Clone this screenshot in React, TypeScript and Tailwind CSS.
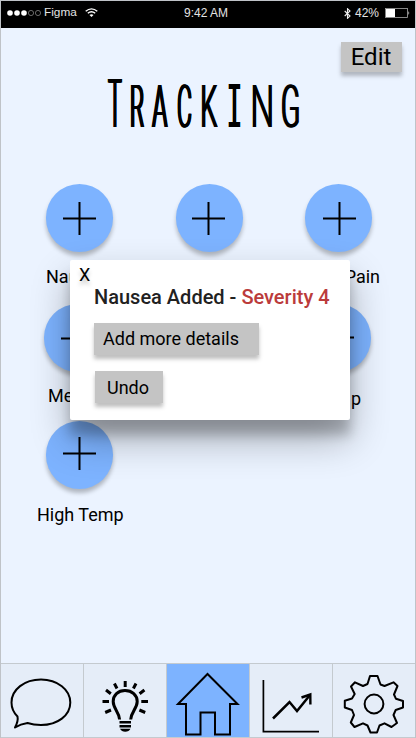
import React from "react";

const title: { ch: string; box: string; glyph: string }[] = [
  { ch: "T", box: "w-[22px]", glyph: "scale-x-[0.38] scale-y-[1.12] origin-[50%_56px]" },
  { ch: "R", box: "w-[22px]", glyph: "scale-x-[0.37]" },
  { ch: "A", box: "w-[24px]", glyph: "scale-x-[0.4]" },
  { ch: "C", box: "w-[24px]", glyph: "scale-x-[0.38]" },
  { ch: "K", box: "w-[26px]", glyph: "scale-x-[0.45] [text-shadow:-2px_0_#000,2px_0_#000]" },
  {
    ch: "I",
    box: "w-[24px]",
    glyph: "font-['DejaVu_Sans_Mono'] text-[58px] scale-x-[0.45] [text-shadow:-1px_0_#000,1px_0_#000]",
  },
  { ch: "N", box: "w-[32px]", glyph: "scale-x-[0.56] [text-shadow:-1.2px_0_#000,1.2px_0_#000]" },
  { ch: "G", box: "w-[26px]", glyph: "scale-x-[0.47] [text-shadow:-2px_0_#000,2px_0_#000]" },
];

function AddButton({ className = "", plus = "" }: { className?: string; plus?: string }) {
  return (
    <button
      className={`flex h-[68px] w-[67px] shrink-0 items-center justify-center rounded-full bg-[#7db3ff] shadow-[0_4px_4px_rgba(0,0,0,0.25)] ${className}`}
    >
      <svg className={`h-[33px] w-[33px] ${plus}`} viewBox="0 0 33 33" stroke="#000" strokeWidth="2">
        <path d="M0 16.5H33M16.5 0V33" />
      </svg>
    </button>
  );
}

function StatusBar() {
  return (
    <header className="flex h-[27px] shrink-0 items-center justify-between bg-black pr-[5px] pl-[6px] font-['Liberation_Sans',sans-serif] text-[12px] leading-none text-[#e4e4e4]">
      <div className="flex w-[150px] items-center pb-[3px]">
        <svg className="h-[8px] w-[35px]" viewBox="0 0 35 8">
          <g fill="#fff">
            <circle cx="3" cy="4" r="2.8" />
            <circle cx="10" cy="4" r="2.8" />
            <circle cx="17" cy="4" r="2.8" />
          </g>
          <g fill="none" stroke="#aaa" strokeWidth=".6">
            <circle cx="24" cy="4" r="2.6" />
            <circle cx="31" cy="4" r="2.6" />
          </g>
        </svg>
        <span className="ml-[2px] text-[11.8px]">Figma</span>
        <svg className="ml-[8px] h-[9px] w-[13px]" viewBox="0 0 13 9" fill="none" stroke="#fff" strokeWidth="1.4">
          <path d="M.7 3.2Q6.5-1.5 12.3 3.2M2.8 5.3Q6.5 2.3 10.2 5.3" />
          <path d="M4.5 7Q6.5 5.4 8.5 7L6.5 9Z" fill="#fff" stroke="none" />
        </svg>
      </div>
      <span className="mr-[3px] pb-[3px] text-[12px]">9:42 AM</span>
      <div className="flex w-[152px] items-center justify-end pb-[3px]">
        <svg className="h-[11px] w-[7px]" viewBox="0 0 7 11" fill="none" stroke="#eee" strokeWidth="1.1">
          <path d="M.7 3L6 8L3.5 10.3V.7L6 3L.7 8" />
        </svg>
        <span className="ml-[4px] text-[12px]">42%</span>
        <svg className="ml-[6px] h-[10px] w-[25px]" viewBox="0 0 25 10">
          <rect x=".5" y=".5" width="22" height="9" fill="none" stroke="#aaa" strokeWidth=".8" />
          <rect x="1" y="1" width="9" height="8" fill="#fff" />
          <path d="M23.5 3Q25 5 23.5 7Z" fill="#fff" />
        </svg>
      </div>
    </header>
  );
}

function Dialog() {
  return (
    <section
      role="dialog"
      className="absolute top-[259px] left-[69px] h-[160px] w-[280px] rounded-[2px] bg-white shadow-[0_19px_38px_rgba(0,0,0,0.3),0_15px_12px_rgba(0,0,0,0.22)]"
    >
      <button className="mt-[5px] ml-[9px] block h-[20px] text-[18px] leading-[20px] [text-shadow:0_4px_4px_rgba(0,0,0,0.25)]">
        X
      </button>
      <h2 className="mt-0 ml-[24px] text-[20px] leading-[24px] font-medium whitespace-nowrap text-[#212121]">
        Nausea Added - <span className="text-[#bb3b3b]">Severity 4</span>
      </h2>
      <button className="mt-[14px] ml-[24px] block h-[32px] w-[165px] bg-[#c4c4c4] pl-[9px] text-left text-[18px] leading-[32px] shadow-[0_4px_4px_rgba(0,0,0,0.25)]">
        Add more details
      </button>
      <button className="mt-[16px] ml-[25px] block h-[32px] w-[68px] bg-[#c4c4c4] pl-[12px] text-left text-[18px] leading-[34px] shadow-[0_4px_4px_rgba(0,0,0,0.25)]">
        Undo
      </button>
    </section>
  );
}

function NavBar() {
  const cell = "border-r border-[#c4cacf]";
  return (
    <nav className="mt-auto grid h-[75px] shrink-0 grid-cols-[83px_83px_83px_83px_82px] border-y border-[#c4cacf] bg-[#e5edf8]">
      <button className={cell}>
        <svg className="h-[73px] w-[82px]" viewBox="1 664 82 73" fill="none" stroke="#000" strokeWidth="2" strokeLinejoin="round">
          <path d="M15 727.5Q18.5 721 17.5 716.5C14 713 11.5 708 11.5 702.5C11.5 689.5 24.5 679.5 41 679.5C57.5 679.5 70.3 689.8 70.3 702.5C70.3 715.5 57.5 725 41 725Q33.5 725 27.5 723Q20.5 724 15 727.5Z" />
        </svg>
      </button>
      <button className={cell}>
        <svg className="h-[73px] w-[82px]" viewBox="84 664 82 73" fill="none" stroke="#000" strokeWidth="3">
          <path d="M125.2 681V687M114.4 683.5L117 688.5M136 683.5L133.4 688.5M106 690L110.8 693.8M144.4 690L139.6 693.8M102.5 701.5H109M141.3 701.5H148M105.2 712.5L111 710M145.2 712.5L139.4 710" />
          <path d="M119.6 719.5C119 711.5 113.2 708.5 113.2 701.5C113.2 695 118 690.5 125 690.5C132 690.5 137.2 695 137.2 701.5C137.2 708.5 131.3 711.5 130.7 719.5" />
          <path d="M119.5 722.2H131M119.5 726.2H131" strokeWidth="2.4" />
          <path d="M120 728.8H130.5Q129 731.8 125.2 731.8Q121.5 731.8 120 728.8Z" fill="#000" stroke="none" />
        </svg>
      </button>
      <button className={`${cell} bg-[#7db3ff]`}>
        <svg className="h-[73px] w-[82px]" viewBox="167 664 82 73" fill="none" stroke="#000" strokeWidth="2">
          <path d="M207.5 674L178 704H186V734.5H200.5V712.5H215V734.5H230V704H237.5Z" />
        </svg>
      </button>
      <button className={cell}>
        <svg className="h-[73px] w-[82px]" viewBox="250 664 82 73" fill="none" stroke="#000">
          <path d="M263.4 680V731.6H319" strokeWidth="1.7" />
          <path d="M273 718.5L289.5 702L297 711L310 695" strokeWidth="2.5" />
          <path d="M301.5 697.5L310.3 694.5L310.4 704.5" strokeWidth="2.4" />
        </svg>
      </button>
      <button>
        <svg className="h-[73px] w-[82px]" viewBox="333 664 82 73" fill="none" stroke="#000" strokeWidth="2" strokeLinejoin="round">
          <path d="M370 676H377.5L380.5 684.5L384.5 686L393.5 682.3L397.5 686L394 694.5L396 698.8L403 701V707.5L395.7 710L393.5 715L397 723L391.5 727L384.5 723.3L379.5 725.5L377 732.5H370.5L367.5 725.5L363 723.3L354.5 727L350.8 722.5L354 715L352 710L344.8 707.5V700.8L352 698.5L354.7 694L351 686.5L355 682.3L363 686L367.5 684Z" />
          <circle cx="374" cy="704" r="9.4" />
        </svg>
      </button>
    </nav>
  );
}

export default function App() {
  return (
    <div className="relative flex h-[738px] w-[416px] flex-col overflow-hidden border-t border-r border-l border-[#bfc3c8] bg-[#ebf3ff] font-[Roboto,sans-serif] text-black">
      <StatusBar />

      <button className="mt-[14px] mr-[13px] h-[30px] w-[61px] self-end bg-[#c4c4c4] pr-px text-[24px] leading-[30px] shadow-[0_4px_4px_rgba(0,0,0,0.25)]">
        Edit
      </button>

      <h1 className="mt-0 ml-[103px] flex h-[70px] text-[60px] leading-[70px] font-light [text-shadow:-2.5px_0_#000,-1.2px_0_#000,1.2px_0_#000,2.5px_0_#000]">
        {title.map(({ ch, box, glyph }) => (
          <span key={ch} className={`flex justify-center ${box}`}>
            <span className={`block shrink-0 ${glyph}`}>{ch}</span>
          </span>
        ))}
      </h1>

      <main className="text-[18px] leading-[22px]">
        <div className="mt-[42px] flex gap-[63px] pl-[45px]">
          <AddButton />
          <AddButton plus="-ml-[2px]" />
          <AddButton className="-ml-px" plus="ml-[2px]" />
        </div>
        <div className="mt-[14px] flex h-[22px] justify-between pr-[35px] pl-[45px]">
          <span>Nausea</span>
          <span>Pain</span>
        </div>
        <div className="mt-[16px] flex gap-[63px] pl-[43px]">
          <AddButton />
          <AddButton />
          <AddButton plus="-mt-[2px]" />
        </div>
        <div className="mt-[13px] flex h-[22px] justify-between pr-[54px] pl-[47px]">
          <span>Me</span>
          <span className="mt-[3px]">p</span>
        </div>
        <div className="mt-[14px] pl-[45px]">
          <AddButton plus="-mt-[3px] -ml-px" />
        </div>
        <div className="mt-[15px] pl-[36px]">High Temp</div>
      </main>

      <Dialog />
      <NavBar />
    </div>
  );
}
